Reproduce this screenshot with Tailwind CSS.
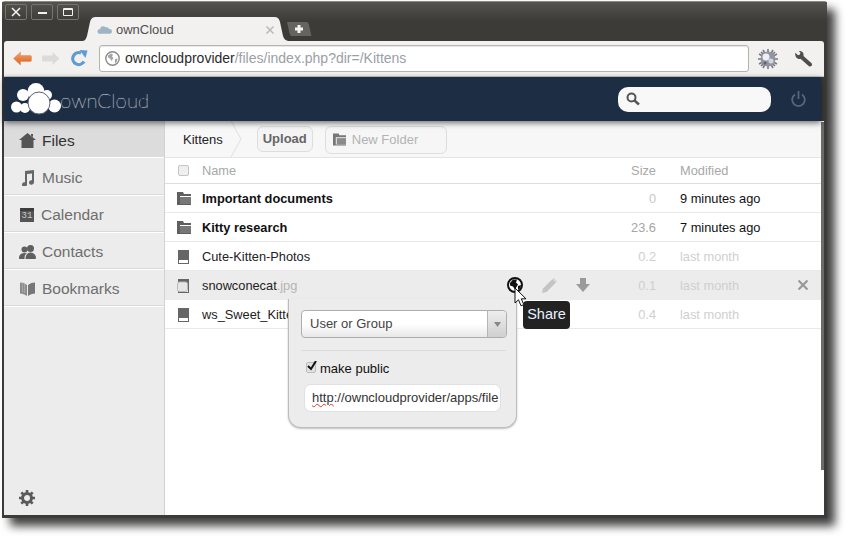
<!DOCTYPE html>
<html lang="en">
<head>
    <meta charset="UTF-8">
    <title>ownCloud</title>
    <script src="https://cdn.jsdelivr.net/npm/@tailwindcss/browser@4"></script>
</head>
<body class="bg-white w-[848px] h-[539px] overflow-hidden pl-[2px] pt-[1px] font-['Liberation_Sans',sans-serif]">
<div class="relative w-[825px] h-[517px] bg-[#3c3b37] border-t border-[#8a8986] rounded-t-[3px] shadow-[8px_8px_10px_rgba(0,0,0,0.75)] pl-[2px] pr-[3px] pb-[3px] flex flex-col">

    <!-- title bar + tabs -->
    <div class="h-[39px] shrink-0 -ml-[2px] -mr-[3px] pl-[3px] bg-gradient-to-b from-[#55534e] to-[#3c3b37] to-[50%] flex items-start">
        <div class="flex gap-[4px] pt-[2px]">
            <div class="w-[22px] h-[16px] border border-[#77756f] rounded-[2px] flex items-center justify-center">
                <svg class="w-[10px] h-[10px]" viewBox="0 0 10 10" stroke="#f2f1ee" stroke-width="1.6"><path d="M1 1l8 8M9 1l-8 8"/></svg>
            </div>
            <div class="w-[22px] h-[16px] border border-[#77756f] rounded-[2px] flex items-center justify-center">
                <div class="w-[9px] h-[2px] bg-[#f2f1ee] mt-[2px]"></div>
            </div>
            <div class="w-[22px] h-[16px] border border-[#77756f] rounded-[2px] flex items-center justify-center">
                <div class="w-[10px] h-[8px] border border-[#f2f1ee] border-t-2 rounded-[1px]"></div>
            </div>
        </div>
        <!-- active tab -->
        <div class="relative w-[208px] h-[24px] mt-[15px] ml-[3px] shrink-0">
            <svg class="absolute inset-0" width="208" height="24" viewBox="0 0 208 24"><path d="M0 24c3 0 4-2 5-5l3-14C9 1 11 0 14 0h178c3 0 5 1 6 5l3 14c1 3 3 5 7 5z" fill="#f2f1ef"/></svg>
            <div class="relative h-full flex items-center pl-[15px] pr-[16px] pt-[1px]">
                <svg class="w-[15px] h-[9px]" viewBox="0 0 16 9" fill="#9db4c6"><circle cx="3" cy="6.500" r="2.500"/><circle cx="6.500" cy="4" r="3"/><circle cx="10" cy="5" r="3"/><circle cx="13.500" cy="6.500" r="2.500"/><rect x="3" y="6" width="10" height="3"/></svg>
                <span class="ml-[4px] text-[13px] text-[#4f4f4f] flex-1">ownCloud</span>
                <svg class="w-[8px] h-[8px]" viewBox="0 0 8 8" stroke="#b9b9b7" stroke-width="1.500"><path d="M.5.5l7 7M7.500.5l-7 7"/></svg>
            </div>
        </div>
        <!-- new tab -->
        <div class="relative w-[25px] h-[14px] mt-[20px] -ml-[3px] shrink-0">
            <svg class="absolute inset-0" width="25" height="14" viewBox="0 0 25 14"><path d="M0 0h19c2 0 2.500 1 3 3l2.500 11H5C3.500 14 3 13 2.500 11z" fill="#66645f"/></svg>
            <svg class="absolute left-[7px] top-[2px] w-[10px] h-[10px]" viewBox="0 0 10 10" fill="#f4f4f2"><path d="M3.500 1h3v2.500H9v3H6.500V9h-3V6.500H1v-3h2.500z"/></svg>
        </div>
    </div>

    <!-- browser toolbar -->
    <div class="h-[36px] shrink-0 bg-[#f2f1ef] rounded-t-[3px] flex items-center pl-[9px] pr-[7px] border-b border-[#c9c8c5]">
        <svg class="w-[19px] h-[15px] shrink-0" viewBox="0 0 19 14"><defs><linearGradient id="ba" x1="0" y1="0" x2="0" y2="1"><stop offset="0" stop-color="#f3a667"/><stop offset="1" stop-color="#dc5c20"/></linearGradient></defs><path d="M.5 7L7.500.5v3.500h9.500c1 0 1.500.5 1.500 1.500v3c0 1-.5 1.500-1.500 1.500H7.500v3.500z" fill="url(#ba)" stroke="#d9915a" stroke-width=".5"/></svg>
        <svg class="w-[18px] h-[15px] shrink-0 ml-[10px]" viewBox="0 0 18 14" fill="#dcdbd8"><path d="M17.500 7L10.500.5v3.500H1.500C.5 4 0 4.500 0 5.500v3c0 1 .5 1.500 1.500 1.500h9v3.500z"/></svg>
        <svg class="w-[17px] h-[17px] shrink-0 ml-[11px]" viewBox="0 0 17 17" fill="none"><path d="M13 11.500A6 6 0 1 1 10 3" stroke="#5f9ad2" stroke-width="3.200"/><path d="M8.500 0l8 .5-2 7.500z" fill="#5f9ad2"/></svg>
        <div class="ml-[11px] w-[650px] h-[27px] shrink-0 bg-white border border-[#b5b4ae] rounded-[3px] flex items-center pl-[5px] text-[14px] shadow-[inset_0_1px_1px_rgba(0,0,0,0.1)]">
            <svg class="w-[15px] h-[15px] shrink-0" viewBox="0 0 15 15"><circle cx="7.500" cy="7.500" r="6.700" fill="#fff" stroke="#8b8b8b" stroke-width="1.400"/><path d="M3 4.500l3-2 2 1-1 2 1.500 1.500-2 3-1.500-2.500-2-1zM10 8l2.500-.5-.5 3-2 2z" fill="#a5a5a5"/></svg>
            <span class="ml-[5px] text-[#2b2b2b]">owncloudprovider</span><span class="text-[#9aa0a6]">/files/index.php?dir=/Kittens</span>
        </div>
        <svg class="w-[20px] h-[20px] shrink-0 ml-[9px]" viewBox="0 0 20 20"><g stroke="#777984" stroke-width="1.600"><path d="M10 0v20M0 10h20M3 3l14 14M17 3L3 17M5 1l10 18M15 1L5 19M1 5l18 10M19 5L1 15"/></g><circle cx="10" cy="10" r="7.500" fill="#9295a2"/><circle cx="8" cy="8" r="3.500" fill="#eef0f4"/><circle cx="13" cy="12" r="2.500" fill="#d5d7de"/><circle cx="7" cy="14" r="1.500" fill="#5f616b"/></svg>
        <svg class="w-[17px] h-[16px] shrink-0 ml-[17px]" viewBox="0 0 17 16" fill="none"><path d="M6 5.500l9 8" stroke="#4e4e4e" stroke-width="4" stroke-linecap="round"/><path d="M.3 1.800L3 4.200 5 3.600 5.400 1.600 3.600 0C6.500-.5 9 1.500 8.500 4.500 8 7 5.500 8.500 3 7.800 1 7.200-.2 4.500.3 1.800z" fill="#4e4e4e"/></svg>
    </div>

    <!-- ownCloud header -->
    <div class="relative z-10 h-[44px] shrink-0 mr-[3px] bg-[#1d2d44] flex items-center shadow-[0_2px_6px_rgba(0,0,0,0.55)]">
        <svg class="absolute left-[7px] top-[6px] w-[52px] h-[33px]" viewBox="0 0 52 33" fill="#fff">
            <circle cx="5.500" cy="24" r="5.500"/><circle cx="12" cy="12" r="6"/><circle cx="14" cy="25" r="5"/><circle cx="25" cy="8.500" r="8.500"/><circle cx="36" cy="12" r="5"/><circle cx="43.500" cy="23" r="6.500"/>
            <circle cx="28" cy="20" r="11" stroke="#53627a" stroke-width="1"/>
        </svg>
        <span class="ml-[56px] mt-[2px] text-[20.500px] leading-none font-['Lato',sans-serif] font-thin text-white [text-shadow:0_0_1px_#ffffff]">ownCloud</span>
        <div class="ml-auto w-[153px] h-[25px] bg-[#f8f8f8] rounded-[10px] flex items-center pl-[8px]">
            <svg class="w-[14px] h-[14px]" viewBox="0 0 14 14" fill="none" stroke="#555" stroke-width="2"><circle cx="5.500" cy="5.500" r="4"/><path d="M8.500 8.500l4.500 4" stroke-width="2.400"/></svg>
        </div>
        <svg class="ml-[20px] mr-[15px] w-[15px] h-[16px]" viewBox="0 0 15 16" fill="none" stroke="#56677d" stroke-width="1.800"><path d="M4 3.500a6.300 6.300 0 1 0 7 0M7.500 0v8"/></svg>
    </div>

    <!-- app body -->
    <div class="relative flex-1 flex min-h-0 bg-white pr-[3px]">
        <!-- sidebar -->
        <aside class="w-[161px] shrink-0 bg-[#ececec] border-r border-[#d2d2d2] flex flex-col text-[15.500px] text-[#6e6e6e]">
            <a class="h-[37px] pt-[3px] flex items-center bg-[#dcdcdc] border-b border-b-white text-[#333]">
                <svg class="ml-[15px] w-[17px] h-[15px] shrink-0 mr-[6px]" viewBox="0 0 17 15" fill="#555"><path d="M8.500 0L17 7h-2.500v8h-12V7H0zM12 1h2v3l-2-1.500z"/></svg>Files
            </a>
            <a class="h-[37px] pt-[3px] flex items-center border-b border-[#d9d9d9] shadow-[0_1px_0_#fff]">
                <svg class="ml-[16px] w-[15px] h-[16px] shrink-0 mr-[7px]" viewBox="0 0 15 16" fill="#666"><path d="M5 1l9-1v12.500a2.500 2.200 0 1 1-2-2.200V3.500L7 4.100v10.400a2.500 2.200 0 1 1-2-2.200z"/></svg>Music
            </a>
            <a class="h-[37px] pt-[3px] flex items-center border-b border-[#d9d9d9] shadow-[0_1px_0_#fff]">
                <span class="ml-[16px] mr-[7px] w-[14px] h-[14px] shrink-0 bg-[#555] border-t-[3px] border-[#3d3d3d] flex items-center justify-center text-[9px] leading-none text-[#c9c9c9] font-['Liberation_Mono',monospace]">31</span>Calendar
            </a>
            <a class="h-[37px] pt-[3px] flex items-center border-b border-[#d9d9d9] shadow-[0_1px_0_#fff]">
                <svg class="ml-[15px] w-[17px] h-[14px] shrink-0 mr-[6px]" viewBox="0 0 17 14" fill="#5f5f5f"><circle cx="5.500" cy="4.500" r="3"/><circle cx="11.500" cy="3.500" r="3.500"/><path d="M0 13c0-3 2-5 5.500-5 1 0 2 .2 2.500.6C6 9.500 5.500 11 5.500 14H1c-.7 0-1-.4-1-1zM6.500 14c0-4 2-6.500 5-6.500s5.500 2.500 5.500 5.500c0 .6-.4 1-1 1z"/></svg>Contacts
            </a>
            <a class="h-[37px] pt-[3px] flex items-center border-b border-[#d9d9d9] shadow-[0_1px_0_#fff]">
                <svg class="ml-[16px] w-[15px] h-[15px] shrink-0 mr-[7px]" viewBox="0 0 15 15"><path d="M0 1.500c2.500 0 5 .8 7 2.500v11c-2-1.500-4.500-2.500-7-2.500z" fill="#8a8a8a"/><path d="M15 1.500c-2.500 0-5 .8-7 2.500v11c2-1.500 4.500-2.500 7-2.500z" fill="#777"/><path d="M2 1l.8 10.500M4.500 2l.3 10" stroke="#bbb" stroke-width=".7"/></svg>Bookmarks
            </a>
            <svg class="mt-auto mb-[9px] ml-[15px] w-[16px] h-[16px]" viewBox="0 0 16 16" fill="none" stroke="#5a5a5a"><circle cx="8" cy="8" r="4.500" stroke-width="3"/><path d="M8 0v3M8 13v3M0 8h3M13 8h3M2.300 2.300l2.200 2.200M11.500 11.500l2.200 2.200M13.700 2.300l-2.200 2.200M4.500 11.500l-2.200 2.200" stroke-width="2.600"/></svg>
        </aside>

        <!-- files -->
        <main class="relative flex-1 min-w-0 text-[12.800px] text-[#1a1a1a]">
            <!-- controls -->
            <div class="h-[37px] pt-[1px] bg-[#f7f7f7] border-b border-[#e4e4e4] flex items-center text-[13px]">
                <span class="ml-[18px] text-[#222]">Kittens</span>
                <svg class="ml-[8px] w-[12px] h-[36px] shrink-0 -mt-[1px]" viewBox="0 0 12 36" fill="none" stroke="#dfdfdf"><path d="M0 0l10 18L0 36"/></svg>
                <div class="ml-[14px] w-[56px] h-[26px] -mt-[2px] border border-[#dedede] rounded-[6px] bg-[#f4f4f4] flex items-center justify-center font-bold text-[#666]">Upload</div>
                <div class="ml-[12px] w-[122px] h-[28px] border border-[#dedede] rounded-[6px] bg-[#f6f6f6] flex items-center pl-[7px] text-[#b3b3b3]">
                    <svg class="w-[13px] h-[13px] mr-[6px]" viewBox="0 0 14 13" fill="#777"><path d="M0 0h6l1 2h7v2H3v8h11v1H0z"/><rect x="4" y="5" width="10" height="7" fill="#8b8b8b"/></svg>New Folder
                </div>
            </div>
            <!-- table head -->
            <div class="h-[26px] flex items-center border-b border-[#dedede] text-[#a8a8a8]">
                <div class="w-[37px] flex justify-center"><span class="w-[11px] h-[11px] rounded-[2px] border border-[#c4c4c4] bg-[#efefef]"></span></div>
                <div class="flex-1">Name</div>
                <div class="w-[60px] text-right">Size</div>
                <div class="ml-[24px] w-[141px]">Modified</div>
            </div>
            <!-- rows -->
            <div class="h-[29px] pt-[1px] flex items-center border-b border-[#e8e8e8]">
                <div class="w-[37px] flex justify-center"><svg class="w-[14px] h-[13px]" viewBox="0 0 14 13" fill="#5f5f5f"><path d="M0 0h6l1 2h7v2H3v8h11v1H0z"/><rect x="3" y="5" width="11" height="7" fill="#777"/></svg></div>
                <div class="flex-1 font-bold text-[#111]">Important documents</div>
                <div class="w-[60px] text-right text-[#c8c8c8]">0</div>
                <div class="ml-[24px] w-[141px] text-[#111]">9 minutes ago</div>
            </div>
            <div class="h-[29px] pt-[1px] flex items-center border-b border-[#e8e8e8]">
                <div class="w-[37px] flex justify-center"><svg class="w-[14px] h-[13px]" viewBox="0 0 14 13" fill="#5f5f5f"><path d="M0 0h6l1 2h7v2H3v8h11v1H0z"/><rect x="3" y="5" width="11" height="7" fill="#777"/></svg></div>
                <div class="flex-1 font-bold text-[#111]">Kitty research</div>
                <div class="w-[60px] text-right text-[#a5a5a5]">23.6</div>
                <div class="ml-[24px] w-[141px] text-[#111]">7 minutes ago</div>
            </div>
            <div class="h-[29px] pt-[1px] flex items-center border-b border-[#e8e8e8]">
                <div class="w-[37px] flex justify-center"><svg class="w-[11px] h-[14px]" viewBox="0 0 11 14"><rect width="11" height="14" fill="#666"/><rect x="1" y="10" width="9" height="3" fill="#fff"/></svg></div>
                <div class="flex-1 text-[#222]">Cute-Kitten-Photos</div>
                <div class="w-[60px] text-right text-[#cfcfcf]">0.2</div>
                <div class="ml-[24px] w-[141px] text-[#cfcfcf]">last month</div>
            </div>
            <div class="h-[29px] flex items-center bg-[#ececec]">
                <div class="relative w-[37px] flex justify-center"><svg class="w-[13px] h-[14px]" viewBox="0 0 13 14"><rect x="1" width="11" height="14" fill="#666"/><rect x="2" y="10" width="9" height="3" fill="#fff"/><rect x=".5" y="3" width="10" height="9.500" rx="2" fill="#e6e6e6" stroke="#b9b9b9"/></svg></div>
                <div class="flex-1 flex items-center text-[#222]">
                    <span>snowconecat</span><span class="text-[#b5b5b5]">.jpg</span>
                    <div class="ml-auto mr-[6px] flex items-center">
                        <svg class="w-[16px] h-[16px] -mt-[1px]" viewBox="0 0 16 16"><circle cx="8" cy="8" r="7" fill="#fff" stroke="#111" stroke-width="2"/><path d="M3 6l3-3.500 4 0-1 3 2 2-3 5-2-3-3-1zM11 9l3-1-.5 3-2.500 2z" fill="#111"/></svg>
                        <svg class="ml-[19px] w-[15px] h-[15px] -mt-[1px]" viewBox="0 0 15 15" fill="#c4c4c4"><path d="M0 15l1-4.500L10.500 1l3.500 3.500L4.500 14z"/><path d="M11.500 0l3.500 3.500-.5.500L11 .5z"/></svg>
                        <svg class="ml-[19px] w-[14px] h-[14px] -mt-[1px]" viewBox="0 0 14 14" fill="#9a9a9a"><path d="M4 0h6v6h4l-7 8-7-8h4z"/></svg>
                    </div>
                </div>
                <div class="w-[60px] text-right text-[#cfcfcf]">0.1</div>
                <div class="ml-[24px] w-[141px] flex items-center text-[#cfcfcf]">
                    last month
                    <svg class="ml-auto mr-[13px] -mt-[2px] w-[10px] h-[10px]" viewBox="0 0 10 10" stroke="#999" stroke-width="2.200"><path d="M.5.5l9 9M9.500.5l-9 9"/></svg>
                </div>
            </div>
            <div class="h-[29px] pt-[1px] flex items-center border-b border-[#e8e8e8]">
                <div class="w-[37px] flex justify-center"><svg class="w-[11px] h-[14px]" viewBox="0 0 11 14"><rect width="11" height="14" fill="#666"/><rect x="1" y="10" width="9" height="3" fill="#fff"/></svg></div>
                <div class="flex-1 text-[#222]">ws_Sweet_Kitten.jpg</div>
                <div class="w-[60px] text-right text-[#cfcfcf]">0.4</div>
                <div class="ml-[24px] w-[141px] text-[#cfcfcf]">last month</div>
            </div>

            <!-- share dropdown -->
            <div class="absolute left-[123px] top-[178px] w-[229px] h-[129px] bg-[#ececec] rounded-b-[13px] border border-t-0 border-[#bdbdbd] shadow-[0_1px_2px_rgba(0,0,0,0.25)] px-[12px] pt-[11px] text-[13px]">
                <div class="w-[206px] h-[28px] border border-[#adadad] rounded-[4px] bg-gradient-to-b from-white from-[50%] to-[#e8e8e8] flex items-center text-[#444]">
                    <span class="flex-1 pl-[8px]">User or Group</span>
                    <div class="w-[19px] h-full border-l border-[#b5b5b5] rounded-r-[4px] bg-gradient-to-b from-[#eeeeee] to-[#cfcfcf] flex items-center justify-center">
                        <svg class="w-[7px] h-[5px]" viewBox="0 0 7 5" fill="#888"><path d="M0 0h7L3.500 5z"/></svg>
                    </div>
                </div>
                <div class="mt-[12px] w-[205px] border-t border-[#dcdcdc]"></div>
                <div class="mt-[10px] ml-[5px] h-[15px] flex items-center text-[#111]">
                    <span class="relative w-[10px] h-[11px] -mt-[2px] rounded-[2px] border border-[#bdbdbd] bg-[#e2e2e2] shrink-0">
                        <svg class="absolute -top-[2px] left-0 w-[10px] h-[10px]" viewBox="0 0 10 10" fill="none" stroke="#111" stroke-width="2"><path d="M1 5l3 3 5-8"/></svg>
                    </span>
                    <span class="ml-[4px]">make public</span>
                </div>
                <div class="mt-[8px] ml-[3px] w-[197px] h-[28px] bg-white border border-[#e0e0e0] rounded-[7px] pl-[7px] flex items-center text-[#333] whitespace-nowrap">
                    <span class="underline decoration-wavy decoration-[#d33] decoration-1">http</span>://owncloudprovider/apps/file
                </div>
            </div>

            <!-- tooltip -->
            <div class="absolute left-[358px] top-[180px] w-[47px] h-[28px] bg-[#222] rounded-[4px] flex items-center justify-center text-[14.500px] text-[#e8f2ff]">Share</div>
        </main>
    </div>

    <!-- scrollbar strip -->
    <div class="absolute right-[3px] top-[120px] w-[3px] h-[348px] bg-[#6b6b6b]"></div>

    <!-- pointer -->
    <svg class="absolute z-20 left-[512px] top-[285px] w-[14px] h-[21px]" viewBox="0 0 14 21"><path d="M1 1v15l3.500-3.200 2.500 6 2.800-1.200-2.500-5.800H12z" fill="#fff" stroke="#111" stroke-width="1"/></svg>
</div>
</body>
</html>
